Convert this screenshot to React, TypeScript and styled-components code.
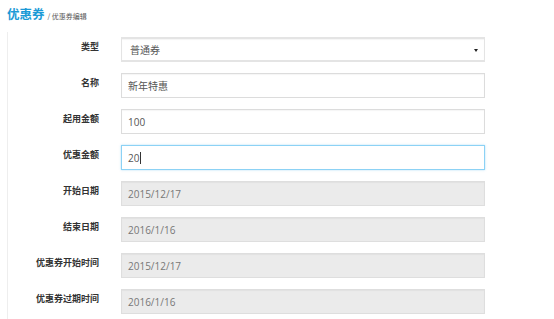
import { FC } from 'react';
import styled, { createGlobalStyle, css } from 'styled-components';

type FieldKind = 'select' | 'text' | 'focus' | 'disabled';

interface RowData {
  label: string;
  value: string;
  kind: FieldKind;
}

const rows: RowData[] = [
  { label: '类型', value: '普通券', kind: 'select' },
  { label: '名称', value: '新年特惠', kind: 'text' },
  { label: '起用金额', value: '100', kind: 'text' },
  { label: '优惠金额', value: '20', kind: 'focus' },
  { label: '开始日期', value: '2015/12/17', kind: 'disabled' },
  { label: '结束日期', value: '2016/1/16', kind: 'disabled' },
  { label: '优惠券开始时间', value: '2015/12/17', kind: 'disabled' },
  { label: '优惠券过期时间', value: '2016/1/16', kind: 'disabled' },
];

const App: FC = () => {
  return (
    <>
      <GlobalStyle />
      <Page>
        <Header>
          <Title>优惠券</Title>
          <Crumb>/ 优惠券编辑</Crumb>
        </Header>
        <Panel>
          {rows.map((row) => (
            <Row key={row.label}>
              <Label>{row.label}</Label>
              <Field $kind={row.kind}>
                <Value $kind={row.kind}>{row.value}</Value>
                {row.kind === 'focus' && <Caret />}
                {row.kind === 'select' && <Arrow />}
              </Field>
            </Row>
          ))}
        </Panel>
      </Page>
    </>
  );
};

const GlobalStyle = createGlobalStyle`
  html, body {
    margin: 0;
    padding: 0;
    background: #fff;
  }
  body {
    font-family: "Open Sans", "Noto Sans CJK SC", sans-serif;
  }
`;

const Page = styled.div`
  width: 554px;
  height: 319px;
  overflow: hidden;
`;

const Header = styled.div`
  display: flex;
  align-items: baseline;
  gap: 3px;
  padding: 4px 7px 0;
  height: 32px;
  box-sizing: border-box;
`;

const Title = styled.span`
  font-size: 12.5px;
  font-weight: bold;
  color: #1b9ad6;
  font-family: "Noto Sans CJK SC", sans-serif;
`;

const Crumb = styled.span`
  font-size: 7px;
  color: #555;
  font-family: "Noto Sans CJK SC", sans-serif;
`;

const Panel = styled.div`
  margin-left: 7px;
  border-left: 1px solid #eeeeee;
  padding-top: 5px;
  display: flex;
  flex-direction: column;
  gap: 11px;
  min-height: 290px;
`;

const Row = styled.div`
  display: grid;
  grid-template-columns: 91px 364px;
  column-gap: 22px;
  height: 25px;
`;

const Label = styled.div`
  text-align: right;
  font-size: 9px;
  line-height: 13px;
  padding-top: 3px;
  font-weight: bold;
  color: #333;
  font-family: "Noto Sans CJK SC", sans-serif;
`;

const Field = styled.div<{ $kind: FieldKind }>`
  position: relative;
  display: flex;
  align-items: center;
  box-sizing: border-box;
  height: 25px;
  padding: 0 6px;
  border: 1px solid #dcdcdc;
  background: #fff;
  box-shadow: inset 0 1px 1px rgba(0, 0, 0, 0.04);

  ${({ $kind }) =>
    $kind === 'select' &&
    css`
      padding-left: 8px;
      border-width: 2px 1px 2px 1px;
      border-color: #e4e4e4;
    `}

  ${({ $kind }) =>
    $kind === 'focus' &&
    css`
      border-color: #8cd2f5;
      box-shadow: 0 0 2px rgba(102, 190, 240, 0.5);
    `}

  ${({ $kind }) =>
    $kind === 'disabled' &&
    css`
      background: #ebebeb;
      border-color: #dedede;
    `}
`;

const Value = styled.span<{ $kind: FieldKind }>`
  font-size: 10px;
  color: ${({ $kind }) => ($kind === 'disabled' ? '#777' : '#555')};
  font-family: "Open Sans", "Noto Sans CJK SC", sans-serif;
`;

const Caret = styled.span`
  display: inline-block;
  width: 1px;
  height: 12px;
  margin-left: 1px;
  background: #333;
`;

const Arrow = styled.span`
  position: absolute;
  right: 6px;
  top: 50%;
  margin-top: -1px;
  width: 0;
  height: 0;
  border-left: 2px solid transparent;
  border-right: 2px solid transparent;
  border-top: 3px solid #222;
`;

export default App;
